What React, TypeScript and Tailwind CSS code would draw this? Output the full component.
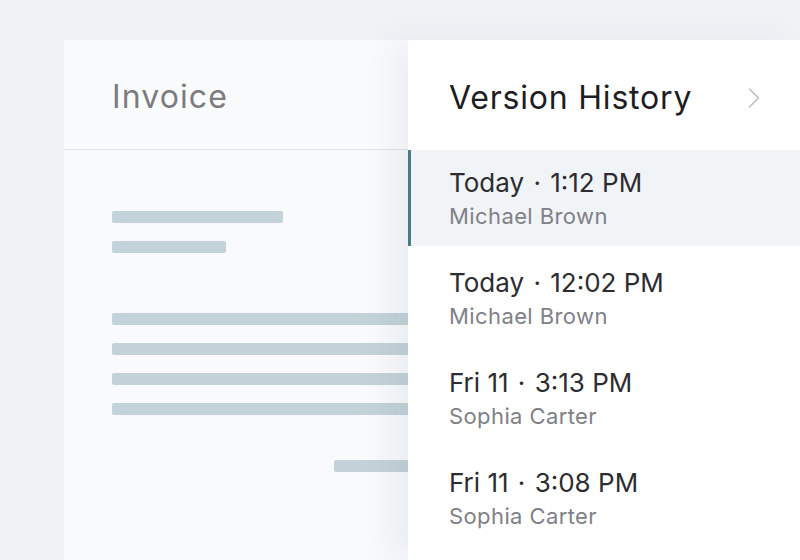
import React from 'react';
import { ChevronRight } from 'lucide-react';

const versions = [
  { day: 'Today', time: '1:12 PM', author: 'Michael Brown', active: true },
  { day: 'Today', time: '12:02 PM', author: 'Michael Brown', active: false },
  { day: 'Fri 11', time: '3:13 PM', author: 'Sophia Carter', active: false },
  { day: 'Fri 11', time: '3:08 PM', author: 'Sophia Carter', active: false },
];

const InvoiceCard: React.FC = () => (
  <div className="w-[344px] h-[520px] bg-[#f8fafc] overflow-hidden">
    <div className="h-[110px] flex items-center pl-[48px] pt-[5px] border-b border-[#e1e5e9] bg-[#fafbfd]">
      <span className="text-[32px] text-[#7b7b80] tracking-[1.1px]">Invoice</span>
    </div>
    <div className="pl-[48px] pt-[61px] flex flex-col">
      <div className="w-[171px] h-[12px] rounded-[2px] bg-[#c4d2d9]" />
      <div className="w-[114px] h-[12px] rounded-[2px] bg-[#c4d2d9] mt-[18px]" />
      <div className="flex flex-col gap-[18px] mt-[60px]">
        <div className="h-[12px] rounded-l-[2px] bg-[#c4d2d9]" />
        <div className="h-[12px] rounded-l-[2px] bg-[#c4d2d9]" />
        <div className="h-[12px] rounded-l-[2px] bg-[#c4d2d9]" />
        <div className="h-[12px] rounded-l-[2px] bg-[#c4d2d9]" />
      </div>
      <div className="ml-auto w-[74px] h-[12px] rounded-l-[2px] bg-[#c4d2d9] mt-[45px]" />
    </div>
  </div>
);

const VersionPanel: React.FC = () => (
  <div className="flex-1 h-[520px] bg-white shadow-[-18px_0_30px_rgba(30,45,60,0.06)] relative">
    <div className="h-[110px] flex items-center justify-between pl-[41px] pr-[28px] pt-[5px]">
      <span className="text-[32px] text-[#1d1d22] tracking-[0.8px]">Version History</span>
      <ChevronRight className="w-[36px] h-[36px] text-[#b8bec5]" strokeWidth={1} />
    </div>
    <div className="flex flex-col">
      {versions.map((v, i) => (
        <div key={i} className="h-[100px]">
          <div
            className={
              v.active
                ? 'h-[96px] bg-[#f1f4f7] border-l-[3px] border-[#4b7a87] pl-[38px] pt-[16px]'
                : 'h-[96px] pl-[41px] pt-[16px]'
            }
          >
            <div className="text-[26px] leading-[34px] text-[#2c2c31]">
              {v.day} <span className="mx-[2px]">·</span> {v.time}
            </div>
            <div className="text-[22px] leading-[32px] text-[#808087] tracking-[0.4px]">{v.author}</div>
          </div>
        </div>
      ))}
    </div>
  </div>
);

export default function App() {
  return (
    <div
      className="w-[800px] h-[560px] overflow-hidden bg-[#f0f3f6] pt-[40px] pl-[64px] flex"
      style={{ fontFamily: 'Inter, "Noto Sans", sans-serif' }}
    >
      <InvoiceCard />
      <VersionPanel />
    </div>
  );
}
